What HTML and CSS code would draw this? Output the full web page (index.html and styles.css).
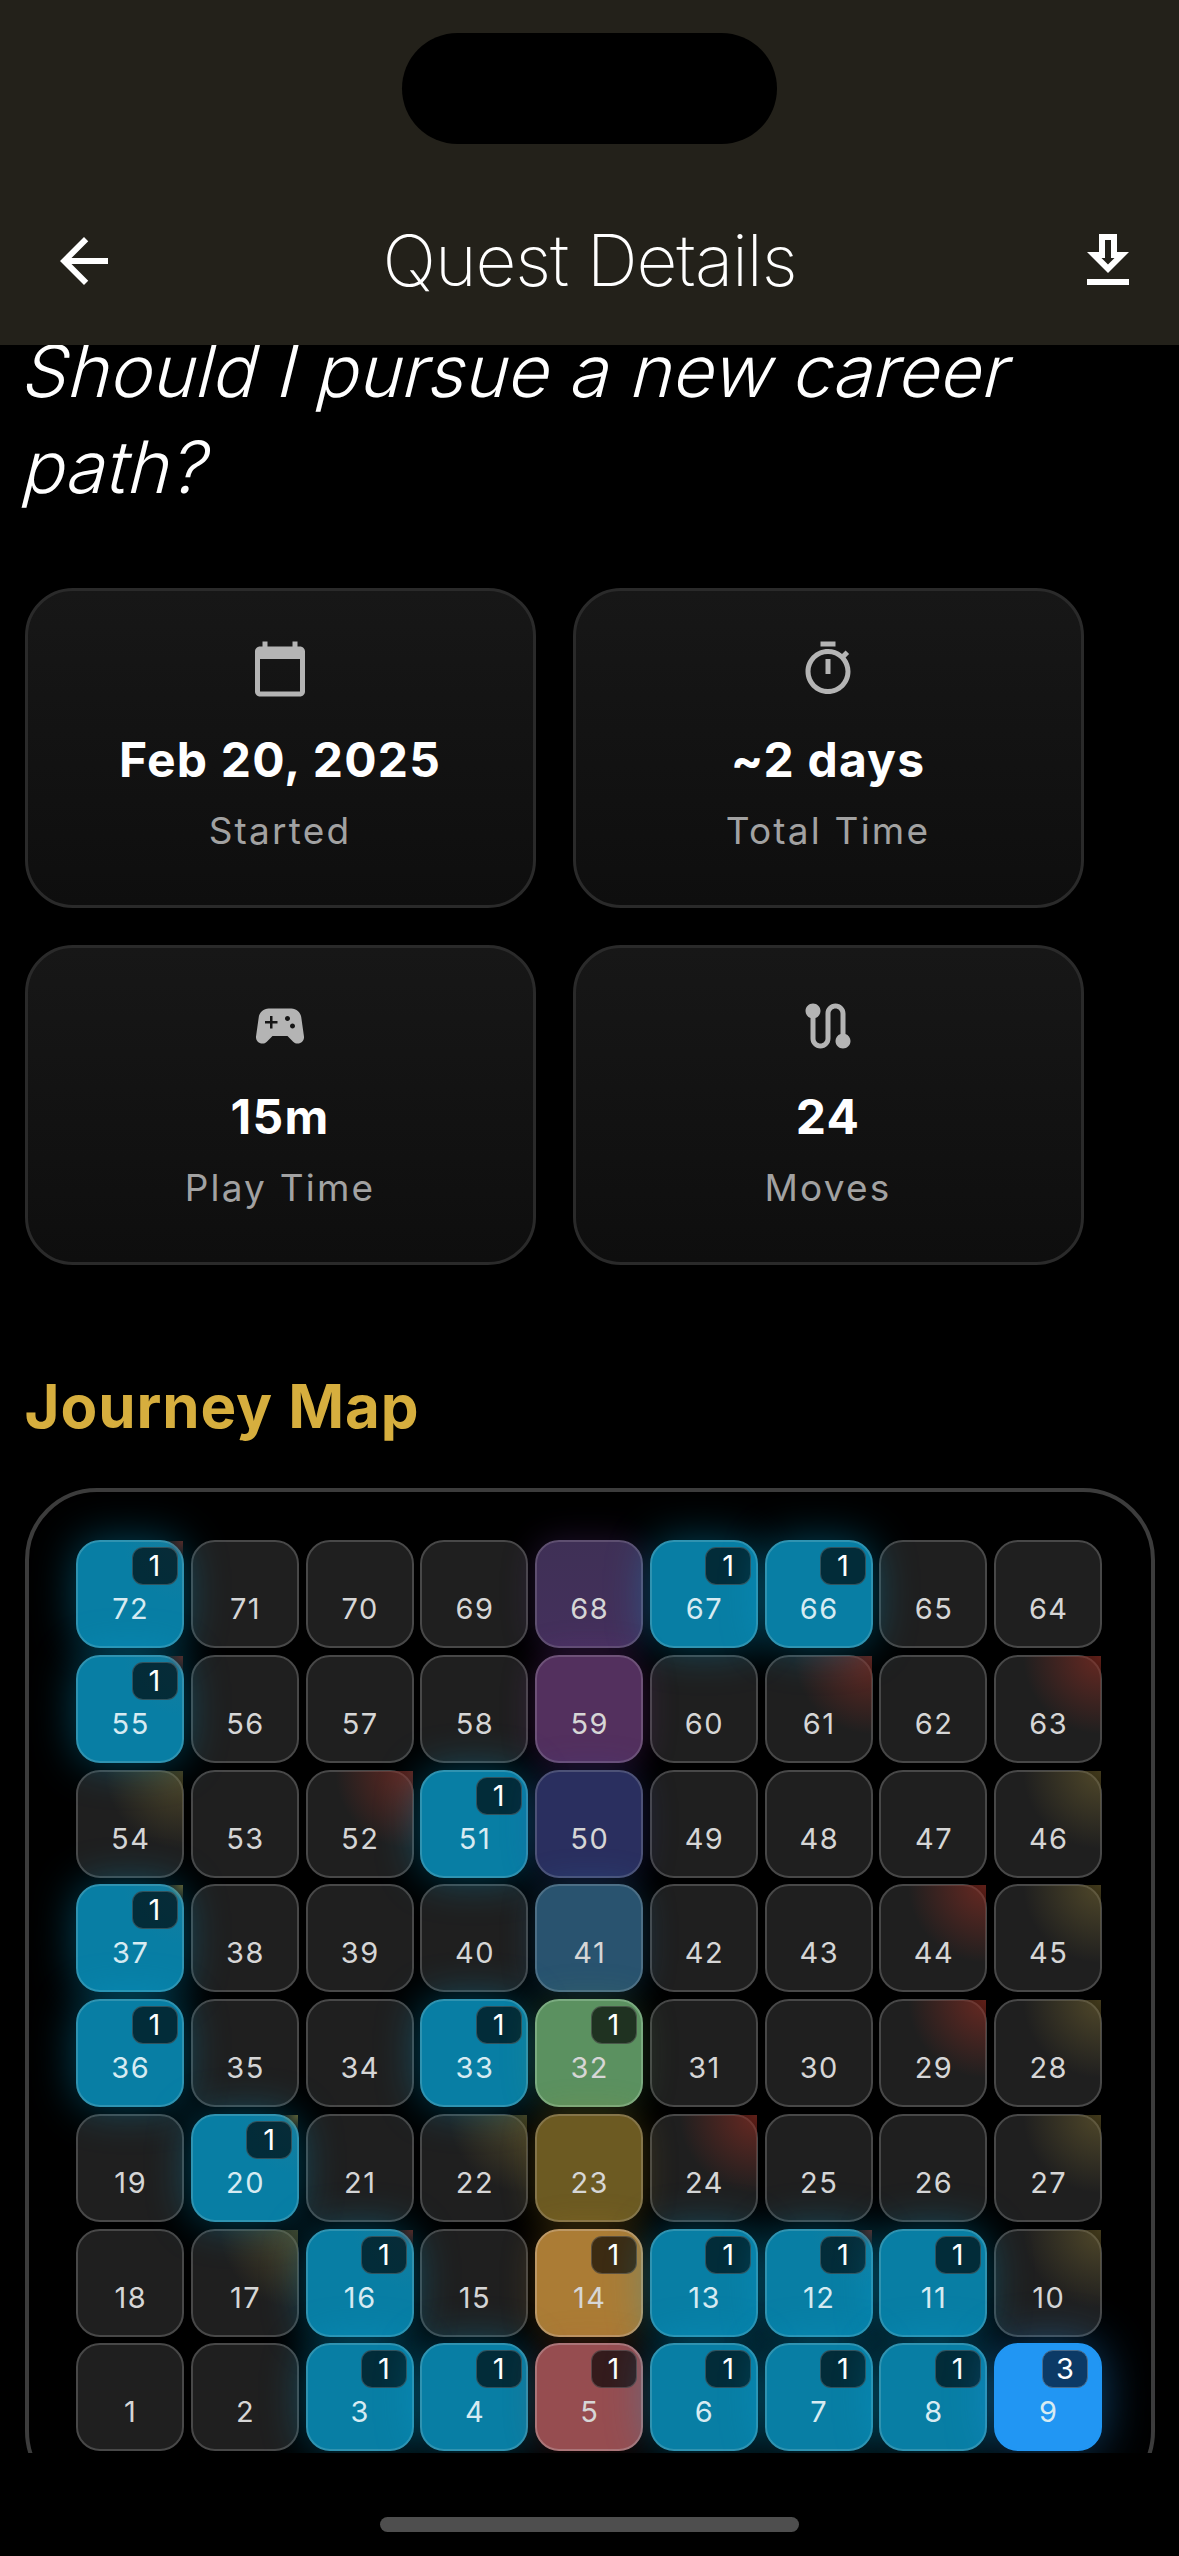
FILE: index.html
```html
<!DOCTYPE html>
<html lang="en">
<head>
<meta charset="utf-8">
<title>Quest Details</title>
<link rel="stylesheet" href="styles.css">
</head>
<body>
<div class="app">
  <header class="header">
    <div class="island"></div>
    <svg class="icon-lg" viewBox="0 0 24 24"><path d="M20 11H7.83l5.59-5.59L12 4l-8 8 8 8 1.41-1.41L7.83 13H20v-2z"/></svg>
    <h1 class="header-title">Quest Details</h1>
    <svg class="icon-lg icon-end" viewBox="0 0 24 24"><path d="M19 9h-4V3H9v6H5l7 7 7-7zm-8 2V5h2v6h1.17L12 13.17 9.83 11H11zm-6 7h14v2H5z"/></svg>
  </header>
  <main class="scroll">
    <div class="content">
      <h2 class="question"><span class="q-line">Should I pursue a new career</span> <span class="q-line">path?</span></h2>
      <section class="stats">
        <div class="stat">
          <svg class="stat-icon" viewBox="0 0 24 24"><path d="M20 3h-1V1h-2v2H7V1H5v2H4c-1.1 0-2 .9-2 2v16c0 1.1.9 2 2 2h16c1.1 0 2-.9 2-2V5c0-1.1-.9-2-2-2zm0 18H4V8h16v13z"/></svg>
          <div class="stat-value">Feb 20, 2025</div>
          <div class="stat-label">Started</div>
        </div>
        <div class="stat">
          <svg class="stat-icon" viewBox="0 0 24 24"><path d="M15 1H9v2h6V1zm-4 13h2V8h-2v6zm8.03-6.61l1.42-1.42c-.43-.51-.9-.99-1.41-1.41l-1.42 1.42C16.07 4.74 14.12 4 12 4c-4.97 0-9 4.03-9 9s4.02 9 9 9 9-4.03 9-9c0-2.12-.74-4.07-1.97-5.61zM12 20c-3.87 0-7-3.13-7-7s3.13-7 7-7 7 3.13 7 7-3.13 7-7 7z"/></svg>
          <div class="stat-value">~2 days</div>
          <div class="stat-label">Total Time</div>
        </div>
        <div class="stat">
          <svg class="stat-icon" viewBox="0 0 24 24"><path d="M21.58 16.09l-1.09-7.66C20.21 6.46 18.52 5 16.53 5H7.47C5.48 5 3.79 6.46 3.51 8.43l-1.09 7.66C2.2 17.63 3.39 19 4.94 19c.68 0 1.32-.27 1.8-.75L9 16h6l2.25 2.25c.48.48 1.13.75 1.8.75 1.56 0 2.75-1.37 2.53-2.91zM11 11H9v2H8v-2H6v-1h2V8h1v2h2v1zm4-1c-.55 0-1-.45-1-1s.45-1 1-1 1 .45 1 1-.45 1-1 1zm2 3c-.55 0-1-.45-1-1s.45-1 1-1 1 .45 1 1-.45 1-1 1z"/></svg>
          <div class="stat-value">15m</div>
          <div class="stat-label">Play Time</div>
        </div>
        <div class="stat">
          <svg class="stat-icon" viewBox="0 0 24 24"><path d="M19 15.18V7c0-2.21-1.79-4-4-4s-4 1.79-4 4v10c0 1.1-.9 2-2 2s-2-.9-2-2V8.82C8.16 8.4 9 7.3 9 6c0-1.66-1.34-3-3-3S3 4.34 3 6c0 1.3.84 2.4 2 2.82V17c0 2.21 1.79 4 4 4s4-1.79 4-4V7c0-1.1.9-2 2-2s2 .9 2 2v8.18c-1.16.41-2 1.51-2 2.82 0 1.66 1.34 3 3 3s3-1.34 3-3c0-1.3-.84-2.4-2-2.82z"/></svg>
          <div class="stat-value">24</div>
          <div class="stat-label">Moves</div>
        </div>
      </section>
      <h2 class="map-title">Journey Map</h2>
      <section class="map">
        <div class="board">
          <div class="cell blue t-red-s"><span class="badge">1</span><span class="num">72</span></div>
          <div class="cell"><span class="num">71</span></div>
          <div class="cell"><span class="num">70</span></div>
          <div class="cell"><span class="num">69</span></div>
          <div class="cell c-violet"><span class="num">68</span></div>
          <div class="cell blue"><span class="badge">1</span><span class="num">67</span></div>
          <div class="cell blue"><span class="badge">1</span><span class="num">66</span></div>
          <div class="cell"><span class="num">65</span></div>
          <div class="cell"><span class="num">64</span></div>

          <div class="cell blue t-red-s"><span class="badge">1</span><span class="num">55</span></div>
          <div class="cell"><span class="num">56</span></div>
          <div class="cell"><span class="num">57</span></div>
          <div class="cell"><span class="num">58</span></div>
          <div class="cell c-purple"><span class="num">59</span></div>
          <div class="cell"><span class="num">60</span></div>
          <div class="cell t-red"><span class="num">61</span></div>
          <div class="cell"><span class="num">62</span></div>
          <div class="cell t-red"><span class="num">63</span></div>

          <div class="cell t-yel"><span class="num">54</span></div>
          <div class="cell"><span class="num">53</span></div>
          <div class="cell t-red"><span class="num">52</span></div>
          <div class="cell blue"><span class="badge">1</span><span class="num">51</span></div>
          <div class="cell c-indigo"><span class="num">50</span></div>
          <div class="cell"><span class="num">49</span></div>
          <div class="cell"><span class="num">48</span></div>
          <div class="cell"><span class="num">47</span></div>
          <div class="cell t-yel"><span class="num">46</span></div>

          <div class="cell blue t-yel-s"><span class="badge">1</span><span class="num">37</span></div>
          <div class="cell"><span class="num">38</span></div>
          <div class="cell"><span class="num">39</span></div>
          <div class="cell"><span class="num">40</span></div>
          <div class="cell c-sky"><span class="num">41</span></div>
          <div class="cell"><span class="num">42</span></div>
          <div class="cell"><span class="num">43</span></div>
          <div class="cell t-red"><span class="num">44</span></div>
          <div class="cell t-yel"><span class="num">45</span></div>

          <div class="cell blue"><span class="badge">1</span><span class="num">36</span></div>
          <div class="cell"><span class="num">35</span></div>
          <div class="cell"><span class="num">34</span></div>
          <div class="cell blue"><span class="badge">1</span><span class="num">33</span></div>
          <div class="cell c-green"><span class="badge">1</span><span class="num">32</span></div>
          <div class="cell"><span class="num">31</span></div>
          <div class="cell"><span class="num">30</span></div>
          <div class="cell t-red"><span class="num">29</span></div>
          <div class="cell t-yel"><span class="num">28</span></div>

          <div class="cell"><span class="num">19</span></div>
          <div class="cell blue t-yel-s"><span class="badge">1</span><span class="num">20</span></div>
          <div class="cell"><span class="num">21</span></div>
          <div class="cell t-yel"><span class="num">22</span></div>
          <div class="cell c-olive"><span class="num">23</span></div>
          <div class="cell t-red"><span class="num">24</span></div>
          <div class="cell"><span class="num">25</span></div>
          <div class="cell"><span class="num">26</span></div>
          <div class="cell t-yel"><span class="num">27</span></div>

          <div class="cell"><span class="num">18</span></div>
          <div class="cell t-yel"><span class="num">17</span></div>
          <div class="cell blue t-red-s"><span class="badge">1</span><span class="num">16</span></div>
          <div class="cell"><span class="num">15</span></div>
          <div class="cell c-orange"><span class="badge">1</span><span class="num">14</span></div>
          <div class="cell blue"><span class="badge">1</span><span class="num">13</span></div>
          <div class="cell blue t-red-s"><span class="badge">1</span><span class="num">12</span></div>
          <div class="cell blue"><span class="badge">1</span><span class="num">11</span></div>
          <div class="cell t-yel"><span class="num">10</span></div>

          <div class="cell"><span class="num">1</span></div>
          <div class="cell"><span class="num">2</span></div>
          <div class="cell blue"><span class="badge">1</span><span class="num">3</span></div>
          <div class="cell blue"><span class="badge">1</span><span class="num">4</span></div>
          <div class="cell c-red"><span class="badge">1</span><span class="num">5</span></div>
          <div class="cell blue"><span class="badge">1</span><span class="num">6</span></div>
          <div class="cell blue"><span class="badge">1</span><span class="num">7</span></div>
          <div class="cell blue"><span class="badge">1</span><span class="num">8</span></div>
          <div class="cell current"><span class="badge">3</span><span class="num">9</span></div>
        </div>
      </section>
    </div>
  </main>
  <footer class="footer"><div class="home-bar"></div></footer>
</div>
</body>
</html>
```

FILE: styles.css
```css
* { box-sizing: border-box; }
html, body { margin: 0; padding: 0; background: #000; }
body { width: 1179px; height: 2556px; overflow: hidden; font-family: Inter, "Noto Sans", sans-serif; color: #fff; }
.app { display: flex; flex-direction: column; height: 2556px; }

.header {
  position: relative; z-index: 5; flex: 0 0 345px;
  display: grid; grid-template-columns: 1fr auto 1fr; align-items: center;
  padding: 177px 48px 0; background: #23211a;
}
.island { position: absolute; left: 402px; top: 33px; width: 375px; height: 111px; border-radius: 56px; background: #000; }
.icon-lg { width: 72px; height: 72px; fill: #fff; display: block; }
.icon-end { justify-self: end; margin-right: -13px; }
.header-title { margin: 0 0 3px; font-size: 71px; font-weight: 200; letter-spacing: -1.1px; line-height: 84px; color: #fff; }

.scroll { flex: 0 0 2108px; overflow: hidden; }
.content { margin-top: -22px; padding: 0 24.5px; }
.question { margin: 0 0 0 -4px; font-size: 72px; font-weight: 300; line-height: 96px; letter-spacing: .15px; color: #fff; }
.q-line { display: block; transform: skewX(-14deg); transform-origin: 0 70%; white-space: nowrap; }

.stats { display: grid; grid-template-columns: repeat(2, 511px); gap: 37px; margin-top: 73px; }
.stat {
  height: 320px; display: flex; flex-direction: column; align-items: center;
  padding-top: 48px; border: 3px solid #2a2a2a; border-radius: 48px;
  background: linear-gradient(180deg, #171717, #0e0e0e);
}
.stat-icon { width: 60px; height: 60px; fill: #b4b4b4; display: block; }
.stat-value { margin-top: 33px; font-size: 48px; font-weight: 700; line-height: 56px; letter-spacing: 1.2px; color: #fff; }
.stat-label { margin-top: 21px; font-size: 37px; font-weight: 400; line-height: 44px; letter-spacing: 2.2px; color: #a2a2a2; }

.map-title { margin: 106px 0 0; font-size: 60px; font-weight: 700; line-height: 70px; letter-spacing: .9px; color: #d6ae3e; }

.map {
  width: 1130px; margin-top: 47px; padding: 48px 47.5px;
  border: 4.5px solid #3c3c3c; border-radius: 72px;
}
.board { display: grid; grid-template-columns: repeat(9, 108px); grid-auto-rows: 108px; gap: 6.75px; }

.cell {
  position: relative; display: flex; align-items: flex-end; justify-content: center;
  padding: 0 0 19px 1.5px; border: 2px solid #484848; border-radius: 24px; background: #1f1f1f;
}
.cell::before { content: ""; position: absolute; inset: 0; pointer-events: none; }
.num { position: relative; font-size: 29px; line-height: 36px; letter-spacing: 1.5px; color: #d6d6d6; }
.badge {
  position: absolute; z-index: 1; top: 5px; right: 4.5px; width: 46px; height: 38px;
  display: flex; align-items: center; justify-content: center;
  font-size: 29px; line-height: 36px; color: #fff;
  border: 1.5px solid rgba(255,255,255,.18); border-radius: 11px; background: rgba(0,0,0,.65);
}

.t-red::before { inset: -1px; background: radial-gradient(circle at 100% 0, rgba(135,45,35,.7), rgba(135,45,35,0) 78px); }
.t-yel::before { inset: -1px; background: radial-gradient(circle at 100% 0, rgba(120,105,50,.55), rgba(120,105,50,0) 78px); }
.t-red-s::before { inset: -1px; background: radial-gradient(circle at 100% 0, rgba(120,55,50,.7), rgba(120,120,120,.1) 16px, rgba(120,120,120,0) 60px); }
.t-yel-s::before { inset: -1px; background: radial-gradient(circle at 100% 0, rgba(130,130,70,.7), rgba(120,120,120,.1) 16px, rgba(120,120,120,0) 60px); }

.blue, .c-violet, .c-purple, .c-indigo, .c-sky, .c-green, .c-olive, .c-orange, .c-red, .current { z-index: 1; }
.blue .num, .current .num { color: #d7ebf2; }
.blue { background: #087ea4; border-color: #2f93b1; box-shadow: 0 0 44px rgba(0,170,225,.4); }
.c-violet { background: linear-gradient(180deg, #3f3056, #44305c); border-color: #5e4f70; box-shadow: 0 0 34px rgba(110,60,160,.28); }
.c-purple { background: #53305e; border-color: #6e5278; box-shadow: 0 0 34px rgba(140,60,170,.3); }
.c-indigo { background: #2a2f5f; border-color: #4d5277; box-shadow: 0 0 34px rgba(60,70,170,.3); }
.c-sky { background: #29536f; border-color: #4d6f86; box-shadow: 0 0 34px rgba(40,130,190,.3); }
.c-green { background: #5b9160; border-color: #7bab80; box-shadow: 0 0 34px rgba(90,160,90,.25); }
.c-olive { background: #6c5a22; border-color: #85754a; box-shadow: 0 0 34px rgba(170,140,40,.3); }
.c-orange { background: #ab7c35; border-color: #bd9865; box-shadow: 0 0 34px rgba(200,140,40,.25); }
.c-red { background: #964d50; border-color: #ab7578; box-shadow: 0 0 34px rgba(180,70,70,.2); }
.current { background: #2196f3; border-color: #2196f3; box-shadow: 0 0 48px rgba(33,150,243,.45); }
.current .badge { background: #0c3a66; border-color: #4a6c8c; right: 12px; }

.footer { flex: 1; display: flex; justify-content: center; padding-top: 64px; background: #000; }
.home-bar { width: 419px; height: 15px; border-radius: 8px; background: #4e4e4e; }
```
